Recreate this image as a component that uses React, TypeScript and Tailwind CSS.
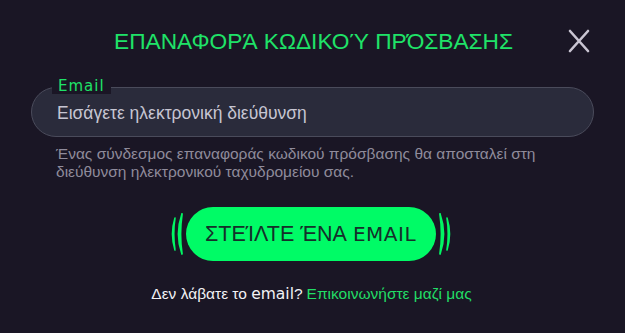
import React from "react";

const wide = { fontFamily: '"DejaVu Sans", "Liberation Sans", sans-serif' };

function Arcs({ side }: { side: "left" | "right" }) {
  const flip = side === "right";
  return (
    <svg width="16" height="44" viewBox="0 0 16 44" className="shrink-0" style={flip ? { transform: "scaleX(-1)" } : undefined}>
      <path d="M6 6 Q1 22 6 38 Q3.5 22 6 6 Z" fill="#00f763" stroke="#00f763" strokeWidth="1.6" strokeLinejoin="round" />
      <path d="M13 2 Q6 22 13 42 Q10 22 13 2 Z" fill="#00f763" stroke="#00f763" strokeWidth="1.8" strokeLinejoin="round" />
    </svg>
  );
}

export default function App() {
  return (
    <div
      className="w-[625px] h-[333px] bg-[#1a1625] relative overflow-hidden"
      style={{ fontFamily: '"Liberation Sans", Arial, sans-serif' }}
    >
      <div className="flex justify-center pt-[28px] pl-[2px]">
        <h1 className="text-[22.7px] leading-[27px] text-[#1fe268]">
          ΕΠΑΝΑΦΟΡΆ ΚΩΔΙΚΟΎ ΠΡΌΣΒΑΣΗΣ
        </h1>
      </div>
      <button className="absolute left-[566px] top-[29px] w-[26px] h-[24px] flex items-center justify-center">
        <svg width="24" height="24" viewBox="0 0 24 24">
          <path d="M3 2 L21 22 M21 2 L3 22" stroke="#c9c5d2" strokeWidth="2.6" strokeLinecap="round" />
        </svg>
      </button>

      <div className="px-[31px] mt-[32px]">
        <div className="relative h-[50px] rounded-[25px] bg-[#2a2b3b] border border-[#4a4b5b] flex items-center pl-[25px]">
          <span
            className="absolute left-[20px] -top-[10px] px-[6px] bg-[#1a1625] text-[#1fe268] text-[15px] leading-[16px] tracking-[1px]"
            style={wide}
          >
            Email
          </span>
          <span className="text-[17.5px] text-[#c6c5d2] mt-[3px]">Εισάγετε ηλεκτρονική διεύθυνση</span>
        </div>
        <p className="mt-[8px] pl-[25px] text-[15.5px] leading-[18px] text-[#8f8b9b]">
          Ένας σύνδεσμος επαναφοράς κωδικού πρόσβασης θα αποσταλεί στη
          <br />
          διεύθυνση ηλεκτρονικού ταχυδρομείου σας.
        </p>
      </div>

      <div className="flex justify-center items-center mt-[26px] ml-[-4px] gap-[1px]">
        <Arcs side="left" />
        <div className="w-[250px] h-[54px] rounded-full bg-[#00fb66] flex items-center justify-center text-[#15302a] text-[21.5px]">
          <span>ΣΤΕΊΛΤΕ ΈΝΑ&nbsp;</span>
          <span style={wide} className="text-[20px] tracking-[0.5px]">EMAIL</span>
        </div>
        <Arcs side="right" />
      </div>

      <div className="flex justify-center mt-[21px] text-[15.5px] ml-[-2px]">
        <span className="text-[#f2f2f5]">
          Δεν λάβατε το <span style={wide}>email</span>?{" "}
        </span>
        <span className="text-[#22dd66] ml-[4px]">Επικοινωνήστε μαζί μας</span>
      </div>
    </div>
  );
}
